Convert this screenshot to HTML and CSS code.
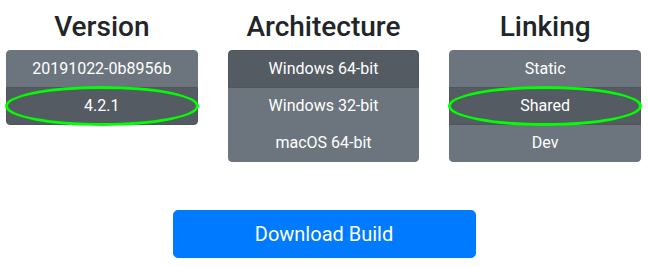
FILE: index.html
```html
<!DOCTYPE html>
<html lang="en">
<head>
    <meta charset="UTF-8">
    <meta name="viewport" content="width=device-width, initial-scale=1.0">
    <title>Build Picker</title>
    <link rel="stylesheet" href="styles.css">
</head>
<body>
    <div class="picker">
        <div class="option">
            <h2>Version</h2>
            <div class="btn-group">
                <button type="button" class="btn">20191022-0b8956b</button>
                <button type="button" class="btn active">4.2.1<span class="mark"></span></button>
            </div>
        </div>
        <div class="option">
            <h2>Architecture</h2>
            <div class="btn-group">
                <button type="button" class="btn active">Windows 64-bit</button>
                <button type="button" class="btn">Windows 32-bit</button>
                <button type="button" class="btn">macOS 64-bit</button>
            </div>
        </div>
        <div class="option">
            <h2>Linking</h2>
            <div class="btn-group">
                <button type="button" class="btn">Static</button>
                <button type="button" class="btn active">Shared<span class="mark"></span></button>
                <button type="button" class="btn">Dev</button>
            </div>
        </div>
    </div>
    <div class="download">
        <button type="button" class="btn-download">Download Build</button>
    </div>
</body>
</html>
```

FILE: styles.css
```css
body {
    margin: 0;
    font-family: Roboto, "Liberation Sans", sans-serif;
    color: #212529;
    background: #fff;
}
.picker {
    display: grid;
    grid-template-columns: repeat(3, 1fr);
    column-gap: 30px;
    padding: 0 7px 0 6px;
}
.option h2 {
    margin: 10px 0 6px;
    font-size: 28px;
    font-weight: 500;
    line-height: 34px;
    text-align: center;
}
.btn-group {
    display: flex;
    flex-direction: column;
}
.btn {
    position: relative;
    padding: 6px 12px;
    font-family: inherit;
    font-size: 16px;
    line-height: 24px;
    color: #fff;
    background-color: #6c757d;
    border: 1px solid #6c757d;
    border-radius: 0;
    text-align: center;
}
.btn + .btn {
    margin-top: -1px;
}
.btn:first-child {
    border-top-left-radius: 4px;
    border-top-right-radius: 4px;
}
.btn:last-child {
    border-bottom-left-radius: 4px;
    border-bottom-right-radius: 4px;
}
.btn.active {
    background-color: #545b62;
    border-color: #4e555b;
    z-index: 1;
}
.mark {
    position: absolute;
    top: -2px;
    bottom: -2px;
    left: -2px;
    right: -2px;
    border: 3px solid #00ff00;
    border-radius: 50%;
}
.download {
    display: flex;
    justify-content: center;
    margin-top: 48px;
}
.btn-download {
    width: 303px;
    padding: 8px 16px;
    font-family: inherit;
    font-size: 20px;
    line-height: 30px;
    color: #fff;
    background-color: #007bff;
    border: 1px solid #007bff;
    border-radius: 4.8px;
}
```
